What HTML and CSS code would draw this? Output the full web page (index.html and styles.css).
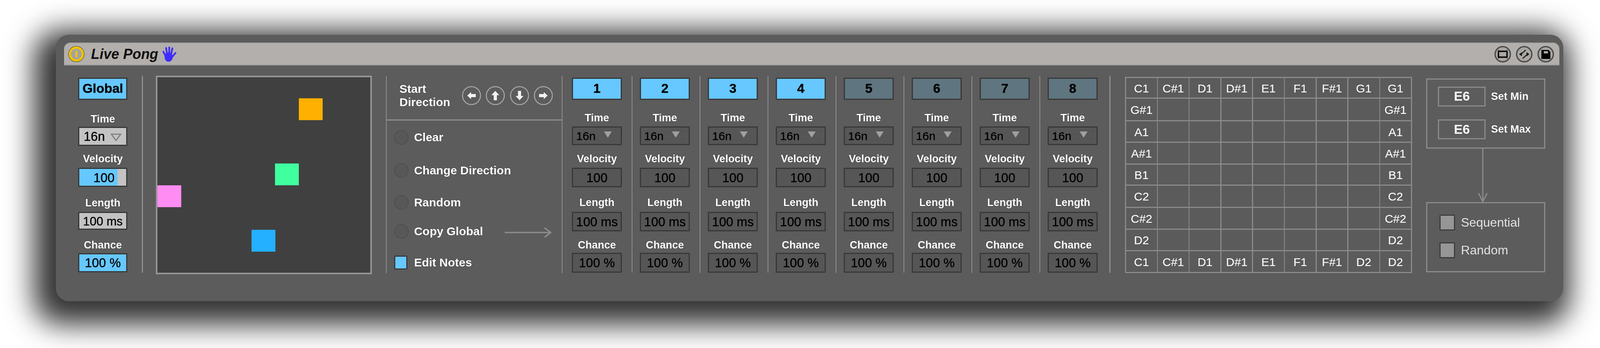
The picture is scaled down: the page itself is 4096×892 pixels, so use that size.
FILE: index.html
```html
<!DOCTYPE html>
<html lang="en">
<head>
<meta charset="utf-8">
<title>Live Pong</title>
<link rel="stylesheet" href="styles.css">
</head>
<body>
<div class="panel">
  <header class="titlebar">
    <svg class="power" viewBox="0 0 44 44"><circle cx="22" cy="22" r="21" fill="#3f3d33"/><circle cx="22" cy="22" r="17" fill="#a3a3a3" stroke="#f2c200" stroke-width="6"/><rect x="19.5" y="13" width="5" height="18" rx="2" fill="#f2c200"/></svg>
    <span class="devname">Live Pong</span>
    <svg class="hand" viewBox="0 0 46 50"><g stroke="#3f2bff" stroke-width="5.5" stroke-linecap="round"><path d="M11 30 4 17"/><path d="M16 26 13 5"/><path d="M23 26V3"/><path d="M29 26 33 6"/><path d="M32 34 43 21"/></g><ellipse cx="21" cy="34" rx="13" ry="15" fill="#3f2bff"/></svg>
    <div class="titleicons">
      <svg class="ticon" viewBox="0 0 44 44"><circle cx="22" cy="22" r="19.5" fill="#a9a6a3" stroke="#4d4d4d" stroke-width="3.5"/><rect x="11" y="14.5" width="22" height="15" rx="2" fill="none" stroke="#000" stroke-width="3.5"/><path d="M10 11l5 3-5 2zM34 11l-5 3 5 2zM10 33l5-3-5-2zM34 33l-5-3 5-2z" fill="#000"/></svg>
      <svg class="ticon" viewBox="0 0 44 44"><circle cx="22" cy="22" r="19.5" fill="#a9a6a3" stroke="#4d4d4d" stroke-width="3.5"/><path d="M9 22l7-5v10zM35 22l-7-5v10z" fill="#000"/><path d="M15 21l10-9M29 23 19 32" stroke="#222" stroke-width="3" stroke-linecap="round"/></svg>
      <svg class="ticon" viewBox="0 0 44 44"><circle cx="22" cy="22" r="19.5" fill="#a9a6a3" stroke="#4d4d4d" stroke-width="3.5"/><path d="M11 11h18l5 5v18H11z" fill="#000"/><rect x="17" y="14" width="11" height="6" rx="1" fill="#a9a6a3"/></svg>
    </div>
  </header>

  <main class="rack">
    <section class="strip global">
      <div class="btn on tall bold">Global</div>
      <div class="lab l-time">Time</div>
      <div class="box light drop">16n<svg class="tri" viewBox="0 0 28 20"><path d="M2 2h24L14 18z" fill="none" stroke="#777" stroke-width="2.5"/></svg></div>
      <div class="lab l-vel">Velocity</div>
      <div class="box meter"><span class="meterval">100</span></div>
      <div class="lab l-len">Length</div>
      <div class="box light shortbox">100 ms</div>
      <div class="lab l-ch">Chance</div>
      <div class="box on">100 %</div>
    </section>

    <div class="sep sep-a"></div>

    <section class="pongfield">
      <i class="sq orange"></i>
      <i class="sq green"></i>
      <i class="sq pink"></i>
      <i class="sq blue"></i>
    </section>

    <section class="controls">
      <div class="startdir">
        <div class="sdtext">Start<br>Direction</div>
        <div class="dirs">
          <svg class="dir" viewBox="0 0 50 50"><circle cx="25" cy="25" r="23" fill="none" stroke="#a8a8a8" stroke-width="2.5"/><path d="M14 25l10-9v5h12v8H24v5z" fill="#f2f2f2"/></svg>
          <svg class="dir" viewBox="0 0 50 50"><circle cx="25" cy="25" r="23" fill="none" stroke="#a8a8a8" stroke-width="2.5"/><path d="M25 13l10 11h-6v13h-8V24h-6z" fill="#f2f2f2"/></svg>
          <svg class="dir" viewBox="0 0 50 50"><circle cx="25" cy="25" r="23" fill="none" stroke="#a8a8a8" stroke-width="2.5"/><path d="M25 37 15 26h6V13h8v13h6z" fill="#f2f2f2"/></svg>
          <svg class="dir" viewBox="0 0 50 50"><circle cx="25" cy="25" r="23" fill="none" stroke="#a8a8a8" stroke-width="2.5"/><path d="M36 25l-10 9v-5H14v-8h12v-5z" fill="#f2f2f2"/></svg>
        </div>
      </div>
      <div class="opts">
        <div class="opt o1"><i class="led"></i>Clear</div>
        <div class="opt o2"><i class="led"></i>Change Direction</div>
        <div class="opt o3"><i class="led"></i>Random</div>
        <div class="opt o4"><i class="led"></i>Copy Global<svg class="copyarrow" viewBox="0 0 120 30"><path d="M0 15H116M102 3 118 15 102 27" fill="none" stroke="#8c8c8c" stroke-width="3.5"/></svg></div>
        <div class="opt o5"><i class="check"></i>Edit Notes</div>
      </div>
    </section>

    <section class="strip ch">
      <div class="btn on tall bold">1</div>
      <div class="lab c-time">Time</div><div class="box drop dropch">16n<i class="mini"></i></div>
      <div class="lab c-vel">Velocity</div><div class="box chbox">100</div>
      <div class="lab c-len">Length</div><div class="box chbox2">100 ms</div>
      <div class="lab c-ch">Chance</div><div class="box chbox2">100 %</div>
    </section>
    <div class="sep sep-c"></div>
    <section class="strip ch">
      <div class="btn on tall bold">2</div>
      <div class="lab c-time">Time</div><div class="box drop dropch">16n<i class="mini"></i></div>
      <div class="lab c-vel">Velocity</div><div class="box chbox">100</div>
      <div class="lab c-len">Length</div><div class="box chbox2">100 ms</div>
      <div class="lab c-ch">Chance</div><div class="box chbox2">100 %</div>
    </section>
    <div class="sep sep-c"></div>
    <section class="strip ch">
      <div class="btn on tall bold">3</div>
      <div class="lab c-time">Time</div><div class="box drop dropch">16n<i class="mini"></i></div>
      <div class="lab c-vel">Velocity</div><div class="box chbox">100</div>
      <div class="lab c-len">Length</div><div class="box chbox2">100 ms</div>
      <div class="lab c-ch">Chance</div><div class="box chbox2">100 %</div>
    </section>
    <div class="sep sep-c"></div>
    <section class="strip ch">
      <div class="btn on tall bold">4</div>
      <div class="lab c-time">Time</div><div class="box drop dropch">16n<i class="mini"></i></div>
      <div class="lab c-vel">Velocity</div><div class="box chbox">100</div>
      <div class="lab c-len">Length</div><div class="box chbox2">100 ms</div>
      <div class="lab c-ch">Chance</div><div class="box chbox2">100 %</div>
    </section>
    <div class="sep sep-c"></div>
    <section class="strip ch">
      <div class="btn off tall bold">5</div>
      <div class="lab c-time">Time</div><div class="box drop dropch">16n<i class="mini"></i></div>
      <div class="lab c-vel">Velocity</div><div class="box chbox">100</div>
      <div class="lab c-len">Length</div><div class="box chbox2">100 ms</div>
      <div class="lab c-ch">Chance</div><div class="box chbox2">100 %</div>
    </section>
    <div class="sep sep-c"></div>
    <section class="strip ch">
      <div class="btn off tall bold">6</div>
      <div class="lab c-time">Time</div><div class="box drop dropch">16n<i class="mini"></i></div>
      <div class="lab c-vel">Velocity</div><div class="box chbox">100</div>
      <div class="lab c-len">Length</div><div class="box chbox2">100 ms</div>
      <div class="lab c-ch">Chance</div><div class="box chbox2">100 %</div>
    </section>
    <div class="sep sep-c"></div>
    <section class="strip ch">
      <div class="btn off tall bold">7</div>
      <div class="lab c-time">Time</div><div class="box drop dropch">16n<i class="mini"></i></div>
      <div class="lab c-vel">Velocity</div><div class="box chbox">100</div>
      <div class="lab c-len">Length</div><div class="box chbox2">100 ms</div>
      <div class="lab c-ch">Chance</div><div class="box chbox2">100 %</div>
    </section>
    <div class="sep sep-c"></div>
    <section class="strip ch">
      <div class="btn off tall bold">8</div>
      <div class="lab c-time">Time</div><div class="box drop dropch">16n<i class="mini"></i></div>
      <div class="lab c-vel">Velocity</div><div class="box chbox">100</div>
      <div class="lab c-len">Length</div><div class="box chbox2">100 ms</div>
      <div class="lab c-ch">Chance</div><div class="box chbox2">100 %</div>
    </section>
    <div class="sep sep-d"></div>

    <section class="matrix">
      <b>C1</b><b>C#1</b><b>D1</b><b>D#1</b><b>E1</b><b>F1</b><b>F#1</b><b>G1</b><b>G1</b>
      <b>G#1</b><b></b><b></b><b></b><b></b><b></b><b></b><b></b><b>G#1</b>
      <b>A1</b><b></b><b></b><b></b><b></b><b></b><b></b><b></b><b>A1</b>
      <b>A#1</b><b></b><b></b><b></b><b></b><b></b><b></b><b></b><b>A#1</b>
      <b>B1</b><b></b><b></b><b></b><b></b><b></b><b></b><b></b><b>B1</b>
      <b>C2</b><b></b><b></b><b></b><b></b><b></b><b></b><b></b><b>C2</b>
      <b>C#2</b><b></b><b></b><b></b><b></b><b></b><b></b><b></b><b>C#2</b>
      <b>D2</b><b></b><b></b><b></b><b></b><b></b><b></b><b></b><b>D2</b>
      <b>C1</b><b>C#1</b><b>D1</b><b>D#1</b><b>E1</b><b>F1</b><b>F#1</b><b>D2</b><b>D2</b>
    </section>

    <section class="range">
      <div class="rangebox">
        <div class="setrow sr1"><div class="note">E6</div><span class="setlab">Set Min</span></div>
        <div class="setrow sr2"><div class="note">E6</div><span class="setlab">Set Max</span></div>
      </div>
      <svg class="downarrow" viewBox="0 0 30 138"><path d="M15 0V135M4 114 15 136 26 114" fill="none" stroke="#8c8c8c" stroke-width="3"/></svg>
      <div class="rangebox modes">
        <div class="mode"><i class="modechk"></i>Sequential</div>
        <div class="mode"><i class="modechk"></i>Random</div>
      </div>
    </section>
  </main>
</div>
</body>
</html>
```
FILE: styles.css
```css
* { box-sizing: border-box; }
html, body { margin: 0; height: 892px; overflow: hidden; background: #fff; }
body { padding: 89px 0 0 143px; font-family: "Liberation Sans", Arial, sans-serif; }

.panel {
  width: 3859px; height: 683px;
  background: #5c5c5c;
  border-radius: 33px;
  padding: 20px 10.5px 0 20.5px;
  box-shadow: -20px 24px 72px 36px rgba(0,0,0,.8);
  filter: blur(.7px);
}

.titlebar {
  height: 59px;
  display: flex; align-items: center;
  background: #b3afac;
  border-radius: 16px 16px 0 0;
  border-top: 2px solid #a3a09d;
  border-bottom: 2px solid #8e8c8a;
  padding: 0 12.6px 0 10.6px;
}
.power { width: 43px; height: 43px; }
.devname { margin-left: 16px; font: italic bold 36px/1 "Liberation Sans", Arial, sans-serif; color: #111; }
.hand { width: 38.5px; height: 40px; margin-left: 9px; }
.titleicons { margin-left: auto; display: flex; gap: 10.8px; }
.ticon { width: 44px; height: 44px; display: block; }

.rack { display: flex; align-items: flex-start; margin-top: 26px; padding-left: 36.8px; }

.strip { width: 126px; padding-top: 5px; display: flex; flex-direction: column; flex: none; }
.strip.ch { width: 128.5px; }

.lab {
  height: 27px; line-height: 27px;
  font-size: 27px; font-weight: 700; text-align: center;
  color: #fff; text-shadow: 0 0 2px rgba(0,0,0,.55);
}
.l-time { margin: 36.3px 0 6px; }
.l-vel  { margin: 20px 0 9.4px; }
.l-len  { margin: 27.5px 0 9.4px; }
.l-ch   { margin: 25.8px 0 7px; }
.c-time { margin: 33px 0 8.5px; }
.c-vel  { margin: 22.5px 0 9.4px; }
.c-len  { margin: 25.7px 0 9.5px; }
.c-ch   { margin: 22px 0 5.8px; }

.btn, .box {
  display: flex; align-items: center; justify-content: center;
  border: 3px solid #383838; border-radius: 2px;
  color: #000; font-size: 32.5px; white-space: nowrap;
  text-shadow: 0 0 1px #000;
}
.box { padding-top: 3px; }
.tall { height: 56.5px; }
.bold { font-weight: 700; font-size: 33.5px; }
.on { background: #66c8ff; }
.off { background: #5f7580; }
.box { height: 49px; background: #565656; }
.light { background: #c3c3c3; }
.shortbox { height: 46px; font-size: 31px; }
.box.on { background: #66c8ff; }
.meter { background: linear-gradient(90deg, #66c8ff 82%, #c3c3c3 82%); }
.meterval { margin-left: 6px; }
.drop { justify-content: flex-start; padding-left: 11px; }
.tri { width: 28px; height: 20px; margin-left: 14px; margin-top: 3px; }
.dropch { height: 47.5px; font-size: 30px; padding-left: 8px; }
.mini {
  width: 0; height: 0; margin-left: 21px; margin-top: -8px;
  border-left: 10.5px solid transparent; border-right: 10.5px solid transparent;
  border-top: 16px solid #a0a0a0;
}
.chbox { height: 50px; }
.chbox2 { height: 50.7px; }

.sep { width: 2.5px; height: 504px; margin-top: .8px; background: #8f8f8f; flex: none; }
.sep-a { margin-left: 36.8px; }
.sep-c { margin-left: 24.5px; margin-right: 18.5px; }
.sep-d { margin-left: 30px; margin-right: 37px; }

.pongfield {
  width: 552.5px; height: 509px; flex: none;
  margin: 0 0 0 33.5px;
  background: #404040;
  border: 4px solid #969696;
  position: relative;
}
.sq { position: absolute; width: 61px; height: 56px; }
.orange { left: 362px; top: 54px; background: #ffb000; }
.green  { left: 301px; top: 221px; background: #40ff9f; }
.pink   { left: 0; top: 277px; background: #ff8cf2; }
.blue   { left: 241px; top: 391px; background: #24b0ff; }

.controls {
  width: 452.6px; height: 505px; flex: none;
  margin: .8px 23.7px 0 36px;
  border-left: 2.5px solid #8f8f8f;
  border-right: 2.5px solid #8f8f8f;
}
.startdir {
  height: 114px;
  border-bottom: 3px solid #8f8f8f;
  display: flex; align-items: flex-start; justify-content: space-between;
  padding: 16px 22px 0 33px;
}
.sdtext { font-size: 30px; font-weight: 700; line-height: 34.3px; color: #fff; text-shadow: 0 0 2px rgba(0,0,0,.55); }
.dirs { display: flex; gap: 11.4px; margin-top: 8px; }
.dir { width: 50px; height: 52px; display: block; }

.opts { padding-left: 19px; display: flex; flex-direction: column; }
.opt {
  height: 40px; display: flex; align-items: center; gap: 14.3px;
  font-size: 30px; font-weight: 700; color: #fff;
  text-shadow: 0 0 2px rgba(0,0,0,.55);
  white-space: nowrap;
}
.o1 { margin-top: 23.5px; }
.o2 { margin-top: 44.5px; }
.o3 { margin-top: 42px; }
.o4 { margin-top: 34.4px; width: 100%; }
.o5 { margin-top: 39.7px; gap: 16.4px; }
.led { width: 37px; height: 37px; border-radius: 50%; border: 2.5px solid #4e4e4e; background: #585858; flex: none; }
.check { width: 34.4px; height: 36px; background: #66c8ff; border: 3px solid #3a3a3a; border-radius: 3px; flex: none; margin-left: .5px; }
.copyarrow { width: 120px; height: 30px; margin: 6px 26px 0 auto; flex: none; }

.matrix {
  width: 735px; height: 503.3px; flex: none;
  margin-top: 3px;
  padding: 3px;
  background: #8a8a8a;
  display: grid;
  grid-template-columns: repeat(9, 1fr);
  grid-template-rows: 50.2px 55.1px 51.9px 52.6px 51px 54.3px 52.7px 51.8px 53.5px;
  gap: 3px 2.5px;
}
.matrix b {
  background: #5b5b5b;
  display: flex; align-items: center; justify-content: center;
  padding-top: 3px;
  font-size: 30px; font-weight: 400; color: #f6f6f6;
  text-shadow: 0 0 1px #f6f6f6, 0 0 2px rgba(0,0,0,.5);
}

.range { width: 305.3px; margin: 7.3px 0 0 36px; flex: none; }
.rangebox { height: 180px; border: 3px solid #8a8a8a; }
.downarrow { display: block; width: 30px; height: 138px; margin-left: 130px; margin-top: -.5px; margin-bottom: -.5px; }
.setrow { display: flex; align-items: center; padding-left: 27.5px; gap: 13.7px; }
.sr1 { margin-top: 17.5px; }
.sr2 { margin-top: 33.5px; }
.note {
  width: 122px; height: 51px; border: 3px solid #8a8a8a;
  display: flex; align-items: center; justify-content: center;
  font-size: 33.5px; font-weight: 700; color: #f6f6f6;
}
.setlab { font-size: 27px; font-weight: 700; color: #fff; text-shadow: 0 0 2px rgba(0,0,0,.55); white-space: nowrap; }
.modes { padding: 29px 0 0 31px; display: flex; flex-direction: column; gap: 30px; }
.mode { height: 41px; display: flex; align-items: center; gap: 15px; font-size: 32px; color: #e2e2e2; white-space: nowrap; }
.modechk { width: 40px; height: 41px; background: #969696; border: 3px solid #3d3d3d; border-radius: 3px; flex: none; }
```
